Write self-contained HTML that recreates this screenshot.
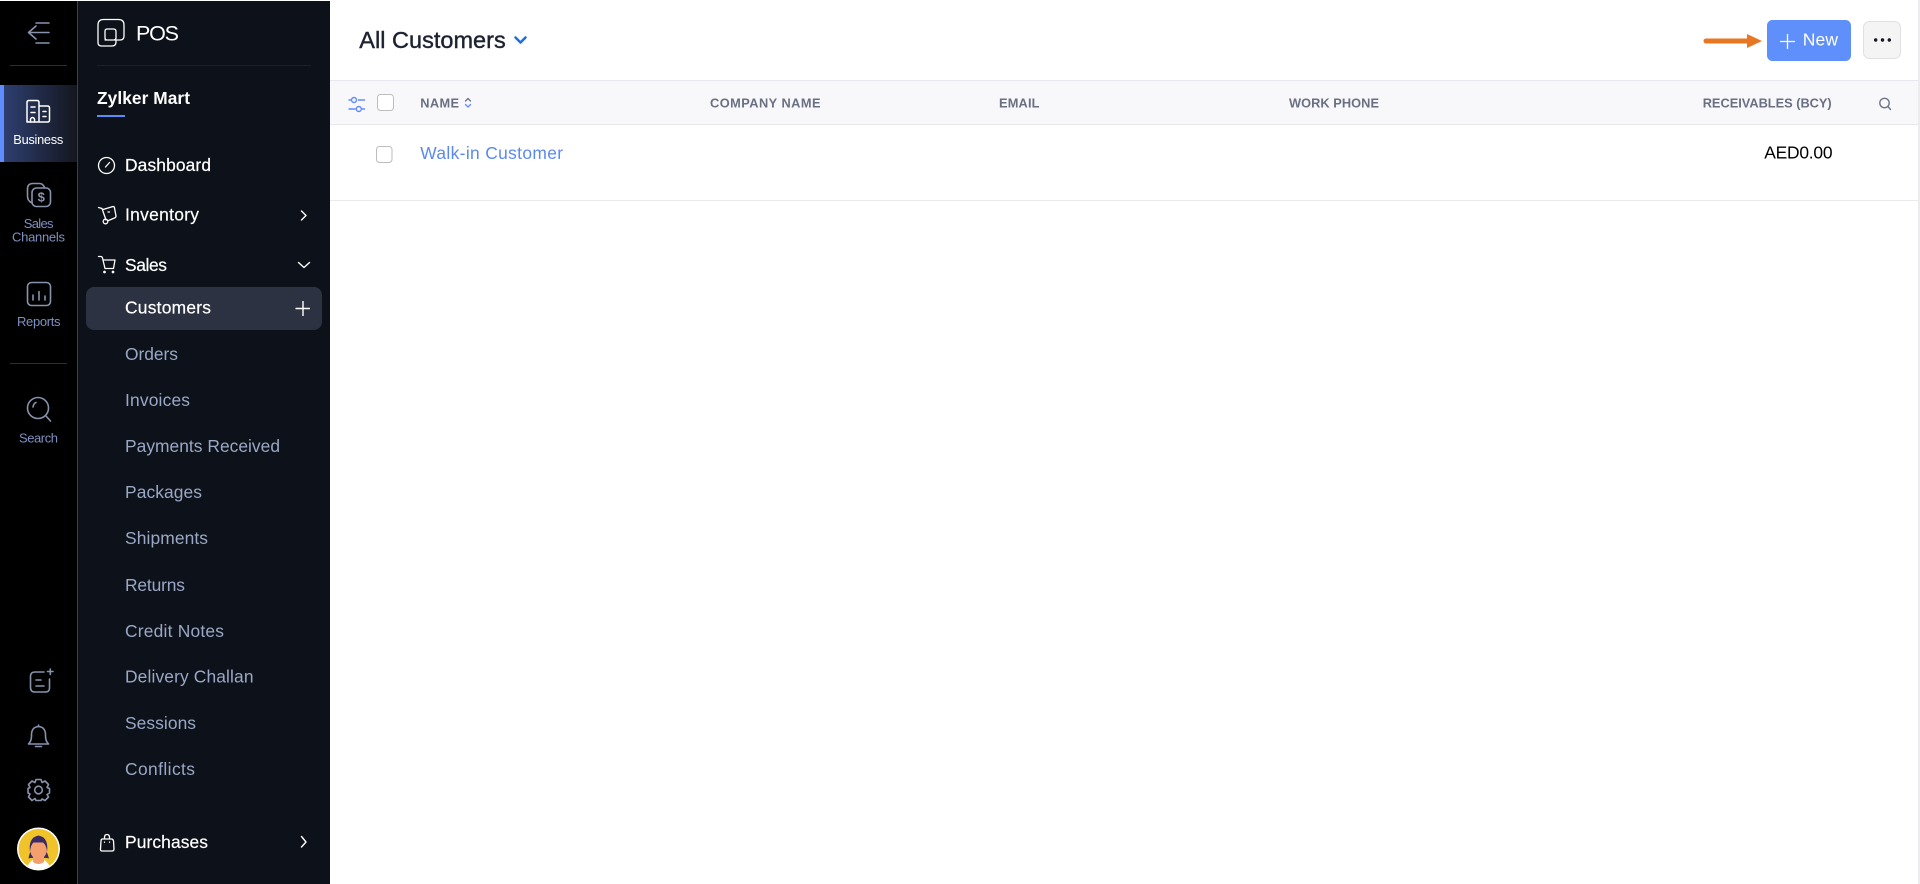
<!DOCTYPE html>
<html lang="en"><head><meta charset="utf-8"><title>All Customers</title>
<style>
html,body{margin:0;padding:0;background:#fff;width:1920px;height:884px;overflow:hidden}
svg{display:block}
text{font-family:"Liberation Sans",sans-serif;white-space:pre}
.w{fill:#fff;font-size:17.4px;stroke:#fff;stroke-width:.2px}
.g{fill:#9aa8c6;font-size:17.4px}
.r{fill:#7d90c0;font-size:13px}
.h{fill:#6a6f82;font-size:12.8px;font-weight:bold}
.i{fill:none;stroke:#8792ad;stroke-width:1.6;stroke-linecap:round;stroke-linejoin:round}
.s{fill:none;stroke:#fff;stroke-width:1.3;stroke-linecap:round;stroke-linejoin:round}
</style></head><body>
<svg width="1920" height="884" viewBox="0 0 1920 884" xmlns="http://www.w3.org/2000/svg">
<defs><linearGradient id="b" x1="0" x2="1" y1="0" y2="0"><stop offset="0" stop-color="#2f4174"/><stop offset="1" stop-color="#14161e"/></linearGradient></defs>
<!-- rail & sidebar -->
<rect x="0" y="1" width="78" height="883" fill="#000"/>
<rect x="77" y="1" width="1" height="883" fill="#3a3f4c"/>
<rect x="78" y="1" width="252" height="883" fill="#0d1119"/>
<rect x="10" y="65" width="57" height="1" fill="#2a2e38"/>
<rect x="10" y="363" width="57" height="1" fill="#2a2e38"/>
<rect x="97" y="65" width="214" height="1" fill="#1b202b"/>
<rect x="0" y="85" width="77" height="77" fill="url(#b)"/>
<rect x="0" y="85" width="4" height="77" fill="#5f8cff"/>
<rect x="86" y="287" width="236" height="43" rx="8" fill="#2c3242"/>

<!-- rail icons -->
<g class="i"><path d="M36 23H49M28.500 32.500H49M36 43H49M36 26L28.500 32.500L36 39"/></g>
<g class="s" style="stroke-width:1.500"><path d="M27 122V102.500Q27 100.500 29 100.500H37Q39 100.500 39 102.500V122ZM39 106H47.500Q49.500 106 49.500 108V120Q49.500 122 47.500 122H29Q27 122 27 120V110"/><path d="M31 107H35M31 112.500H35M43 111.500H46M43 116.500H46M30.500 122V119Q32.500 116 34.500 119V122"/></g>
<g class="i"><rect x="32" y="188" width="18.500" height="18.500" rx="4.500"/><path d="M32 203Q27.500 201 27.500 196V189Q27.500 183.500 33 183.500H39.500Q43 183.500 44.500 187.500"/></g>
<text x="41.300" y="201.700" text-anchor="middle" style="font-size:13px;font-weight:bold;fill:#8792ad">$</text>
<g class="i"><rect x="27.500" y="282.500" width="23" height="23" rx="4"/><path d="M33 295V300M39 291.500V300M45 296V300"/></g>
<g class="i"><circle cx="38" cy="408" r="10.500"/><path d="M45.500 415.500L50.500 421M33 407Q33.500 403.500 36 402.500"/></g>
<g class="i"><path d="M44 672H35Q30.500 672 30.500 676.500V687.500Q30.500 692 35 692H45.500Q49.500 692 49.500 688V679M36 680H41M36 686H44M47.500 671.500H53M50.300 669V674.500"/></g>
<g class="i"><path d="M28.500 744Q31.500 741 31.500 736V734Q32 727 38.500 726.500Q45 727 45.500 734V736Q45.500 741 48.500 744ZM35.500 746.500H41.500M38.500 726.500V725"/></g>
<g class="i"><path d="M36 779.500H41L42 782.500L45 781L48.500 784.500L47 787.500L49.500 788.500V793L47 794.500L48.500 797L45 800.500L42 799L41 800.500H36L35 798.500L32 800.500L28.500 797L30 794L28 793V788.500L30 787.500L28.500 784.500L32 781L35 782.500Z"/><circle cx="38.500" cy="790" r="3.800"/></g>
<!-- avatar -->
<circle cx="38.500" cy="849" r="21.500" fill="#fff"/>
<clipPath id="av"><circle cx="38.500" cy="849" r="20"/></clipPath>
<g clip-path="url(#av)"><rect x="18" y="828" width="42" height="42" fill="#f0c32b"/>
<path d="M25 872Q28 860 38.500 858Q49 860 52 872Z" fill="#fff"/>
<path d="M31 850Q29 855 28.500 858.500Q33 857 36 859H41Q44 857 49 858.500Q48 855 46 850Z" fill="#3b2a66"/>
<path d="M33 856H44V862Q38.500 866 33 862Z" fill="#f3a06e"/>
<ellipse cx="38.500" cy="849" rx="8.500" ry="10.500" fill="#f3a06e"/>
<path d="M30 852Q28 837.500 38.500 835.500Q49 837.500 47 852Q46.500 845 43 842.500H33.500Q30.500 845 30 852Z" fill="#3b2a66"/></g>

<!-- sidebar icons -->
<g class="s"><path d="M98 25Q98 19.500 103.500 19.500H118.500Q124 19.500 124 25V36Q124 40 120 40H116V42Q116 46 112 46H101.500Q98 46 98 42.500Z"/><path d="M107 29H113.500Q116 29 116 31.500V37.500Q116 40 113.500 40H107Q105 40 105 37.500V31.500Q105 29 107 29ZM105 40H116"/></g>
<g class="s"><circle cx="106.500" cy="165.500" r="8"/><path d="M105.500 167L109.500 162.500"/></g>
<g class="s"><path d="M98.500 207.500L102 208.500L106 220M103 209.500L113 206.500Q114.500 206.500 114.500 208L116 216Q116 217.500 114.500 218L108.500 220.500M108 212H109.500"/><circle cx="105.500" cy="221.500" r="2.300"/></g>
<g class="s"><path d="M98.500 256.500H101Q102 256.500 102.500 258L105 268.500H113.500L115 260H103"/><circle cx="104.500" cy="272" r=".7" fill="#fff"/><circle cx="113" cy="272" r=".7" fill="#fff"/></g>
<g class="s"><path d="M102.500 839H111.500Q113 839 113.500 841L114 849Q114 851 112 851H102Q100.300 851 100.500 849L101 841Q101 839 102.500 839ZM104.500 839V837.500Q104.500 834.500 107 834.500Q109.500 834.500 109.500 837.500V839M104.500 842V842.200M109.500 842V842.200"/></g>
<g class="s" style="stroke-width:1.400"><path d="M301.500 211L306 215.500L301.500 220M298.500 262.500L304 267.500L309.500 262.500M301.500 836.500L306 842L301.500 847"/></g>
<path d="M303 301V316M295.500 308.500H310" stroke="#fff" stroke-width="1.400" fill="none"/>

<!-- rail labels -->
<text x="13.300" y="144" textLength="50" style="fill:#fff;font-size:12.800px">Business</text>
<text class="r" x="23.700" y="228" textLength="29.800">Sales</text>
<text class="r" x="12" y="241.700" textLength="53">Channels</text>
<text class="r" x="17" y="326" textLength="43.500">Reports</text>
<text class="r" x="19" y="442.700" textLength="39">Search</text>

<!-- sidebar labels -->
<text x="136" y="40.700" textLength="43" style="fill:#fff;font-size:21.500px">POS</text>
<text x="97" y="104" textLength="93" style="fill:#fff;font-size:17.300px;font-weight:bold">Zylker Mart</text>
<rect x="97" y="115" width="28" height="2" fill="#5b8cf5"/>
<text class="w" x="125" y="171" textLength="86">Dashboard</text>
<text class="w" x="125" y="220.700" textLength="74">Inventory</text>
<text class="w" x="125" y="271" textLength="42">Sales</text>
<text class="w" x="125" y="313.700" textLength="86">Customers</text>
<text class="g" x="125" y="360" textLength="53">Orders</text>
<text class="g" x="125" y="406" textLength="65">Invoices</text>
<text class="g" x="125" y="452" textLength="155">Payments Received</text>
<text class="g" x="125" y="498" textLength="77">Packages</text>
<text class="g" x="125" y="544" textLength="83">Shipments</text>
<text class="g" x="125" y="591" textLength="60">Returns</text>
<text class="g" x="125" y="637" textLength="99">Credit Notes</text>
<text class="g" x="125" y="682.700" textLength="128.500">Delivery Challan</text>
<text class="g" x="125" y="729" textLength="71">Sessions</text>
<text class="g" x="125" y="775" textLength="70">Conflicts</text>
<text class="w" x="125" y="848" textLength="83">Purchases</text>

<!-- main -->
<text x="359.300" y="48" textLength="146.400" style="font-size:23.500px;fill:#1c2230;stroke:#1c2230;stroke-width:.4px">All Customers</text>
<path d="M515.500 37.500L520.500 42.500L525.500 37.500" fill="none" stroke="#1b6fe0" stroke-width="2.500" stroke-linecap="round" stroke-linejoin="round"/>

<path d="M1706 41H1750" stroke="#e87722" stroke-width="5" stroke-linecap="round"/>
<path d="M1747 34L1762 41L1747 48Z" fill="#e87722"/>
<rect x="1767" y="20" width="84" height="41" rx="5.500" fill="#5f8ffa"/>
<path d="M1787.500 34V49M1780 41.500H1795" stroke="#fff" stroke-width="1.300"/>
<text x="1802.700" y="45.700" textLength="35.300" style="fill:#fff;font-size:17.500px">New</text>
<rect x="1863.500" y="21.500" width="37" height="37" rx="6" fill="#f4f4f5" stroke="#e0e0e2"/>
<circle cx="1875.700" cy="40" r="1.700" fill="#14171f"/><circle cx="1882.500" cy="40" r="1.700" fill="#14171f"/><circle cx="1889.300" cy="40" r="1.700" fill="#14171f"/>

<rect x="330" y="80" width="1590" height="45" fill="#f8f8fb"/>
<rect x="330" y="80" width="1590" height="1" fill="#e6e7ef"/>
<rect x="330" y="124" width="1590" height="1" fill="#e6e7ef"/>
<rect x="330" y="200" width="1590" height="1" fill="#e9eaf0"/>
<rect x="1918" y="0" width="2" height="884" fill="#ececee"/>

<g fill="none" stroke="#5f8cff" stroke-width="1.400"><path d="M348.500 100H351M358 100H365M348.500 109H355.500M362 109H365"/><circle cx="354" cy="100" r="2.500"/><circle cx="358.800" cy="109" r="2.500"/></g>
<rect x="377.500" y="94.500" width="16" height="16" rx="3" fill="#fff" stroke="#bdbdbd"/>
<rect x="376.500" y="146.500" width="15.500" height="16" rx="3" fill="#fff" stroke="#bdbdbd"/>
<text class="h" x="420.300" y="107.300" textLength="38.700">NAME</text>
<g fill="none" stroke-width="1.300" stroke-linecap="round" stroke-linejoin="round"><path d="M465.500 101L468 98.500L470.500 101" stroke="#6a6f82"/><path d="M465.500 104.500L468 107L470.500 104.500" stroke="#5f8cff"/></g>
<text class="h" x="710" y="107.300" textLength="110.500">COMPANY NAME</text>
<text class="h" x="999" y="107.300" textLength="40.500">EMAIL</text>
<text class="h" x="1289" y="107.300" textLength="90">WORK PHONE</text>
<text class="h" x="1702.700" y="107.300" textLength="129">RECEIVABLES (BCY)</text>
<g fill="none" stroke="#6f7488" stroke-width="1.400" stroke-linecap="round"><circle cx="1884.500" cy="103" r="4.700"/><path d="M1888 106.500L1890.500 109.500"/></g>

<text x="420.300" y="159" textLength="142.700" style="fill:#5b88f0;font-size:17.400px">Walk-in Customer</text>
<text x="1764.300" y="158.700" textLength="68.200" style="fill:#000;font-size:17.400px">AED0.00</text>
</svg>
</body></html>
